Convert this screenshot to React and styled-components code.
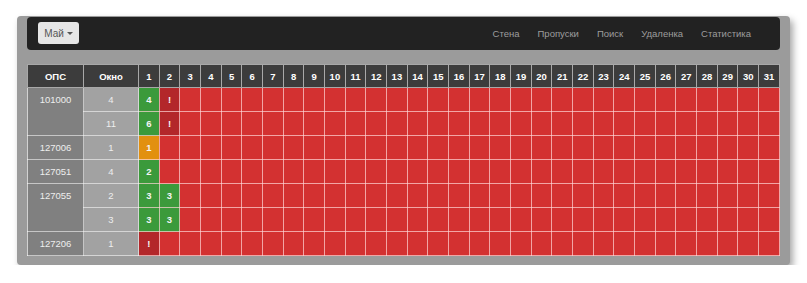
import React from 'react';
import styled, { createGlobalStyle } from 'styled-components';

const GlobalStyle = createGlobalStyle`
    body {
        margin: 0;
        background: #ffffff;
        font-family: "Liberation Sans", Arial, sans-serif;
    }
`;

const rows = [
    { ops: '101000', windows: [{ num: '4', days: [['4', 'ok'], ['!', 'bad']] }, { num: '11', days: [['6', 'ok'], ['!', 'bad']] }] },
    { ops: '127006', windows: [{ num: '1', days: [['1', 'warn']] }] },
    { ops: '127051', windows: [{ num: '4', days: [['2', 'ok']] }] },
    { ops: '127055', windows: [{ num: '2', days: [['3', 'ok'], ['3', 'ok']] }, { num: '3', days: [['3', 'ok'], ['3', 'ok']] }] },
    { ops: '127206', windows: [{ num: '1', days: [['!', 'bad']] }] },
];

const links = ['Стена', 'Пропуски', 'Поиск', 'Удаленка', 'Статистика'];

const dayColors = {
    ok: '#3b9a3b',
    warn: '#e2900f',
    bad: '#b3272a',
    empty: '#d33131',
};

function App() {
    const days = Array.from({ length: 31 }, (_, i) => i + 1);

    return (
        <Page>
            <GlobalStyle />
            <Panel>
                <Navbar>
                    <MonthButton>
                        Май <Caret />
                    </MonthButton>
                    <NavLinks>
                        {links.map((l) => (
                            <NavLink key={l}>{l}</NavLink>
                        ))}
                    </NavLinks>
                </Navbar>

                <Grid>
                    <colgroup>
                        <col style={{ width: 56 }} />
                        <col style={{ width: 55 }} />
                        {days.map((d) => (
                            <col key={d} />
                        ))}
                    </colgroup>
                    <thead>
                        <tr>
                            <Head>ОПС</Head>
                            <Head>Окно</Head>
                            {days.map((d) => (
                                <Head key={d}>{d}</Head>
                            ))}
                        </tr>
                    </thead>
                    <tbody>
                        {rows.map((r) =>
                            r.windows.map((w, wi) => (
                                <tr key={r.ops + wi}>
                                    {wi === 0 && (
                                        <OpsCell rowSpan={r.windows.length}>{r.ops}</OpsCell>
                                    )}
                                    <WindowCell>{w.num}</WindowCell>
                                    {days.map((d, di) => {
                                        const cell = w.days[di];
                                        return (
                                            <DayCell key={d} status={cell ? cell[1] : 'empty'}>
                                                {cell ? cell[0] : ''}
                                            </DayCell>
                                        );
                                    })}
                                </tr>
                            ))
                        )}
                    </tbody>
                </Grid>
            </Panel>
        </Page>
    );
}

const Page = styled.div`
    padding: 16px 0 0 17px;
`;

const Panel = styled.div`
    width: 773px;
    height: 249px;
    box-sizing: border-box;
    padding: 1px 10px 8px 10px;
    background: #9b9b9b;
    border-radius: 4px;
    box-shadow: 3px 4px 7px rgba(0, 0, 0, 0.35);
`;

const Navbar = styled.div`
    height: 33px;
    display: flex;
    align-items: center;
    justify-content: space-between;
    padding: 0 29px 0 11px;
    background: #222222;
    border-radius: 4px;
    margin-bottom: 14px;
`;

const MonthButton = styled.div`
    width: 41px;
    height: 22px;
    box-sizing: border-box;
    display: flex;
    align-items: center;
    justify-content: center;
    gap: 3px;
    background: #e6e6e6;
    border-radius: 3px;
    color: #555555;
    font-size: 10px;
    margin-top: -1px;
`;

const Caret = styled.span`
    width: 0;
    height: 0;
    border-left: 3px solid transparent;
    border-right: 3px solid transparent;
    border-top: 3px solid #555555;
`;

const NavLinks = styled.div`
    display: flex;
    gap: 18px;
`;

const NavLink = styled.span`
    color: #9d9d9d;
    font-size: 9.5px;
`;

const Grid = styled.table`
    width: 753px;
    border-collapse: collapse;
    table-layout: fixed;
    border: 1px solid #c8c8c8;
    font-size: 9.5px;
    text-align: center;
`;

const Cell = styled.td`
    border: 1px solid rgba(255, 255, 255, 0.55);
    padding: 0;
    height: 23px;
    color: #eeeeee;
`;

const Head = styled(Cell).attrs({ as: 'th' })`
    background: #3c3c3c;
    color: #ffffff;
    font-weight: bold;
    height: 22px;
    border-color: #a8a8a8;
`;

const OpsCell = styled(Cell)`
    background: #808080;
    vertical-align: top;
    padding-top: 6px;
    height: auto;
`;

const WindowCell = styled(Cell)`
    background: #a2a2a2;
`;

const DayCell = styled(Cell)`
    background: ${(props) => dayColors[props.status]};
    color: #f4f4f4;
    font-weight: bold;
    border-color: rgba(255, 215, 215, 0.7);
`;

export default App;
